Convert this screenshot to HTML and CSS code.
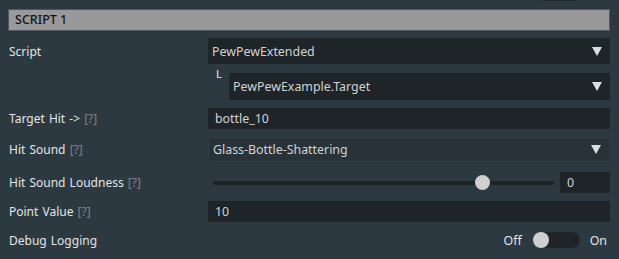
FILE: index.html
```html
<!DOCTYPE html>
<html>
<head>
<meta charset="utf-8">
<link rel="stylesheet" href="styles.css">
</head>
<body>
<div class="topnub"></div>
<div class="panel">
  <div class="header">SCRIPT 1</div>

  <div class="row r1">
    <div class="label">Script</div>
    <div class="ctrl">
      <div class="select dark"><span>PewPewExtended</span><span class="arrow"></span></div>
    </div>
  </div>

  <div class="row r2">
    <div class="label"></div>
    <div class="ctrl sub">
      <span class="sub-l">L</span>
      <div class="select dark grow"><span>PewPewExample.Target</span><span class="arrow"></span></div>
    </div>
  </div>

  <div class="row r3">
    <div class="label">Target Hit -&gt; <span class="help">[?]</span></div>
    <div class="ctrl">
      <div class="input">bottle_10</div>
    </div>
  </div>

  <div class="row r4">
    <div class="label">Hit Sound <span class="help">[?]</span></div>
    <div class="ctrl">
      <div class="select light"><span>Glass-Bottle-Shattering</span><span class="arrow"></span></div>
    </div>
  </div>

  <div class="row r5">
    <div class="label">Hit Sound Loudness <span class="help">[?]</span></div>
    <div class="ctrl slider-ctrl">
      <div class="slider"><div class="track"></div><div class="thumb"></div></div>
      <div class="input num">0</div>
    </div>
  </div>

  <div class="row r6">
    <div class="label">Point Value <span class="help">[?]</span></div>
    <div class="ctrl">
      <div class="input">10</div>
    </div>
  </div>

  <div class="row r7">
    <div class="label">Debug Logging</div>
    <div class="ctrl toggle-ctrl">
      <span class="tlabel">Off</span>
      <div class="toggle"><div class="knob"></div></div>
      <span class="tlabel on">On</span>
    </div>
  </div>
</div>
</body>
</html>
```

FILE: styles.css
```css
html, body {
  margin: 0;
  padding: 0;
  background: #2d3940;
  width: 619px;
  height: 259px;
  overflow: hidden;
  font-family: "Noto Sans", "Open Sans", sans-serif;
  font-size: 12px;
  color: #e2e4e5;
}

.topnub {
  position: absolute;
  left: 542px;
  top: 0;
  width: 34px;
  height: 1px;
  background: #222a2f;
}

.panel {
  padding: 9px 9px 0 8px;
  display: flex;
  flex-direction: column;
}

.header {
  height: 20px;
  line-height: 20px;
  background: #999999;
  border: 1px solid #4d575d;
  color: #121416;
  padding-left: 6px;
  font-size: 12.5px;
  font-weight: 500;
}

.row {
  display: grid;
  grid-template-columns: 200px 1fr;
  align-items: center;
}

.label {
  padding-left: 1px;
  white-space: nowrap;
  word-spacing: 1px;
}

.help {
  color: #7c8488;
}

.ctrl {
  display: flex;
  align-items: center;
  height: 100%;
  font-size: 12.4px;
}

.r1 { margin-top: 7px; height: 26px; }
.r2 { margin-top: 9px; height: 27px; }
.r3 { margin-top: 8px; height: 21px; }
.r4 { margin-top: 8px; height: 25px; }
.r5 { margin-top: 10px; height: 21px; }
.r6 { margin-top: 8px; height: 21px; }
.r7 { margin-top: 9px; height: 18px; }

.select {
  flex: 1;
  height: 100%;
  display: flex;
  align-items: center;
  justify-content: space-between;
  padding: 0 8px 0 4px;
  color: #d0d3d4;
  box-sizing: border-box;
}
.select.dark { background: #1e2428; }
.select.light {
  background: #283239;
  border: 1px solid #323d44;
}

.arrow {
  width: 0;
  height: 0;
  border-left: 5px solid transparent;
  border-right: 5px solid transparent;
  border-top: 9px solid #dcdedf;
}

.sub { padding-left: 8px; align-items: stretch; }
.sub-l {
  width: 13px;
  color: #e8eaeb;
  font-size: 11px;
  line-height: 12px;
  margin-top: -5px;
}
.sub .select { padding-left: 4px; }

.input {
  flex: 1;
  height: 100%;
  background: #1e2428;
  display: flex;
  align-items: center;
  padding-left: 7px;
  color: #d0d3d4;
  box-sizing: border-box;
}

.slider-ctrl { gap: 6px; }
.slider {
  position: relative;
  flex: 1;
  height: 100%;
  margin-left: 5px;
}
.track {
  position: absolute;
  left: 0;
  right: 0;
  top: 9px;
  height: 4px;
  border-radius: 2px;
  background: #1c2226;
}
.thumb {
  position: absolute;
  left: 262px;
  top: 3px;
  width: 15px;
  height: 15px;
  border-radius: 50%;
  background: #cfcfcf;
}
.input.num {
  flex: 0 0 50px;
  padding-left: 7px;
}

.toggle-ctrl {
  justify-content: flex-end;
}
.tlabel { color: #e2e4e5; }
.toggle {
  width: 47px;
  height: 16px;
  border-radius: 8px;
  background: #1e2428;
  margin: 0 10px 0 11px;
  position: relative;
}
.knob {
  position: absolute;
  left: 0;
  top: 0;
  width: 16px;
  height: 16px;
  border-radius: 50%;
  background: #cfcfcf;
}
.tlabel.on { margin-right: 3px; }
```
